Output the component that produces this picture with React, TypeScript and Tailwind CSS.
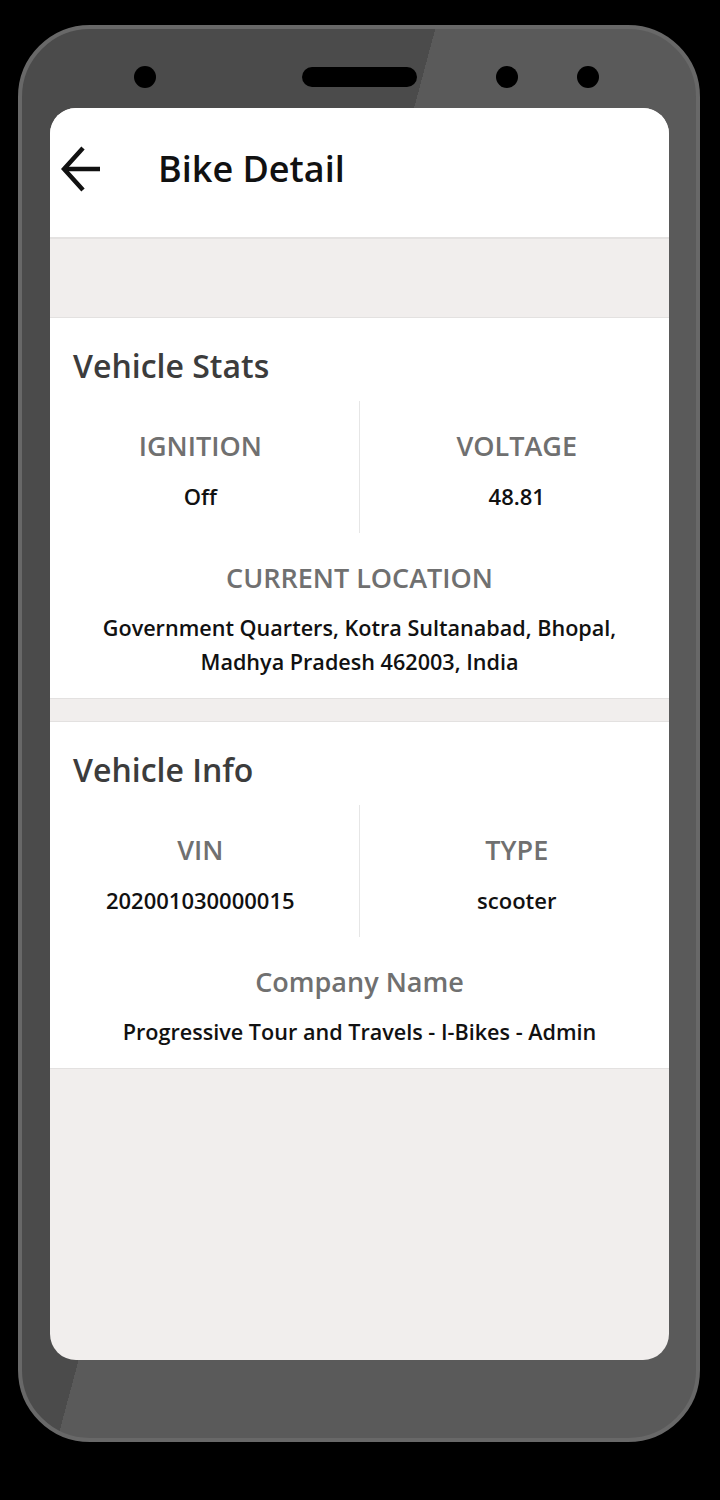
import type { ReactNode } from 'react';

const font = { fontFamily: '"Open Sans", "Noto Sans", sans-serif' };

function Stat({ label, value }: { label: string; value: string }) {
  return (
    <div className="flex flex-col items-center pt-[26px] pb-[22px]">
      <span className="text-[27px] leading-[38px] font-semibold text-[#707070]">{label}</span>
      <span className="mt-[16px] text-[22px] leading-[30px] font-semibold text-[#111]">{value}</span>
    </div>
  );
}

function Card({ title, children }: { title: string; children: ReactNode }) {
  return (
    <section className="border-b border-[#e3e1e0] bg-white pt-[25px]">
      <h2 className="pl-[23px] text-[32px] leading-[46px] font-semibold text-[#3c3c3c]">{title}</h2>
      {children}
    </section>
  );
}

function Split({ left, right }: { left: ReactNode; right: ReactNode }) {
  return (
    <div className="mt-[12px] grid grid-cols-2">
      <div className="border-r border-[#e6e6e6] pr-[8px]">{left}</div>
      <div className="pl-[5px]">{right}</div>
    </div>
  );
}

function Wide({ label, value }: { label: string; value: string }) {
  return (
    <div className="flex flex-col items-center px-[24px] pt-[26px] pb-[19px] text-center">
      <span className="text-[27px] leading-[38px] font-semibold text-[#707070]">{label}</span>
      <p className="mt-[14px] text-[21.6px] leading-[34px] font-semibold text-[#111]">{value}</p>
    </div>
  );
}

export default function App() {
  return (
    <div className="min-h-[1500px] w-[720px] bg-black pt-[25px] pl-[18px]" style={font}>
      <div className="flex h-[1417px] w-[682px] flex-col rounded-[72px] border-[4px] border-[#686868] bg-[linear-gradient(105deg,#4b4b4b_39.3%,#5a5a5a_39.3%)] pr-[27px] pb-[78px] pl-[28px]">
        {/* top bezel: cameras + speaker */}
        <div className="flex h-[79px] items-start pt-[37px]">
          <div className="ml-[84px] h-[22px] w-[22px] rounded-full bg-black" />
          <div className="mt-[1px] ml-[146px] h-[20px] w-[115px] rounded-full bg-black" />
          <div className="ml-[79px] h-[22px] w-[22px] rounded-full bg-black" />
          <div className="ml-[59px] h-[22px] w-[22px] rounded-full bg-black" />
        </div>

        <div className="flex flex-1 flex-col overflow-hidden rounded-[26px] bg-[#f1eeed]">
          <header className="flex h-[131px] items-center border-b-2 border-[#e4e2e1] bg-white pb-[7px] pl-[11px]">
            <svg width="40" height="48" viewBox="0 0 40 48" fill="none" stroke="#111" strokeWidth="4.5" strokeLinejoin="miter">
              <path d="M3 24H39" />
              <path d="M22 3L3 24L22 45" />
            </svg>
            <h1 className="ml-[57px] text-[36px] leading-[48px] font-semibold text-[#111]">Bike Detail</h1>
          </header>

          <div className="h-[79px] border-b border-[#e3e1e0]" />

          <Card title="Vehicle Stats">
            <Split left={<Stat label="IGNITION" value="Off" />} right={<Stat label="VOLTAGE" value="48.81" />} />
            <Wide label="CURRENT LOCATION" value="Government Quarters, Kotra Sultanabad, Bhopal, Madhya Pradesh 462003, India" />
          </Card>

          <div className="h-[23px] border-b border-[#e3e1e0]" />

          <Card title="Vehicle Info">
            <Split left={<Stat label="VIN" value="202001030000015" />} right={<Stat label="TYPE" value="scooter" />} />
            <Wide label="Company Name" value="Progressive Tour and Travels - I-Bikes - Admin" />
          </Card>
        </div>
      </div>
    </div>
  );
}
